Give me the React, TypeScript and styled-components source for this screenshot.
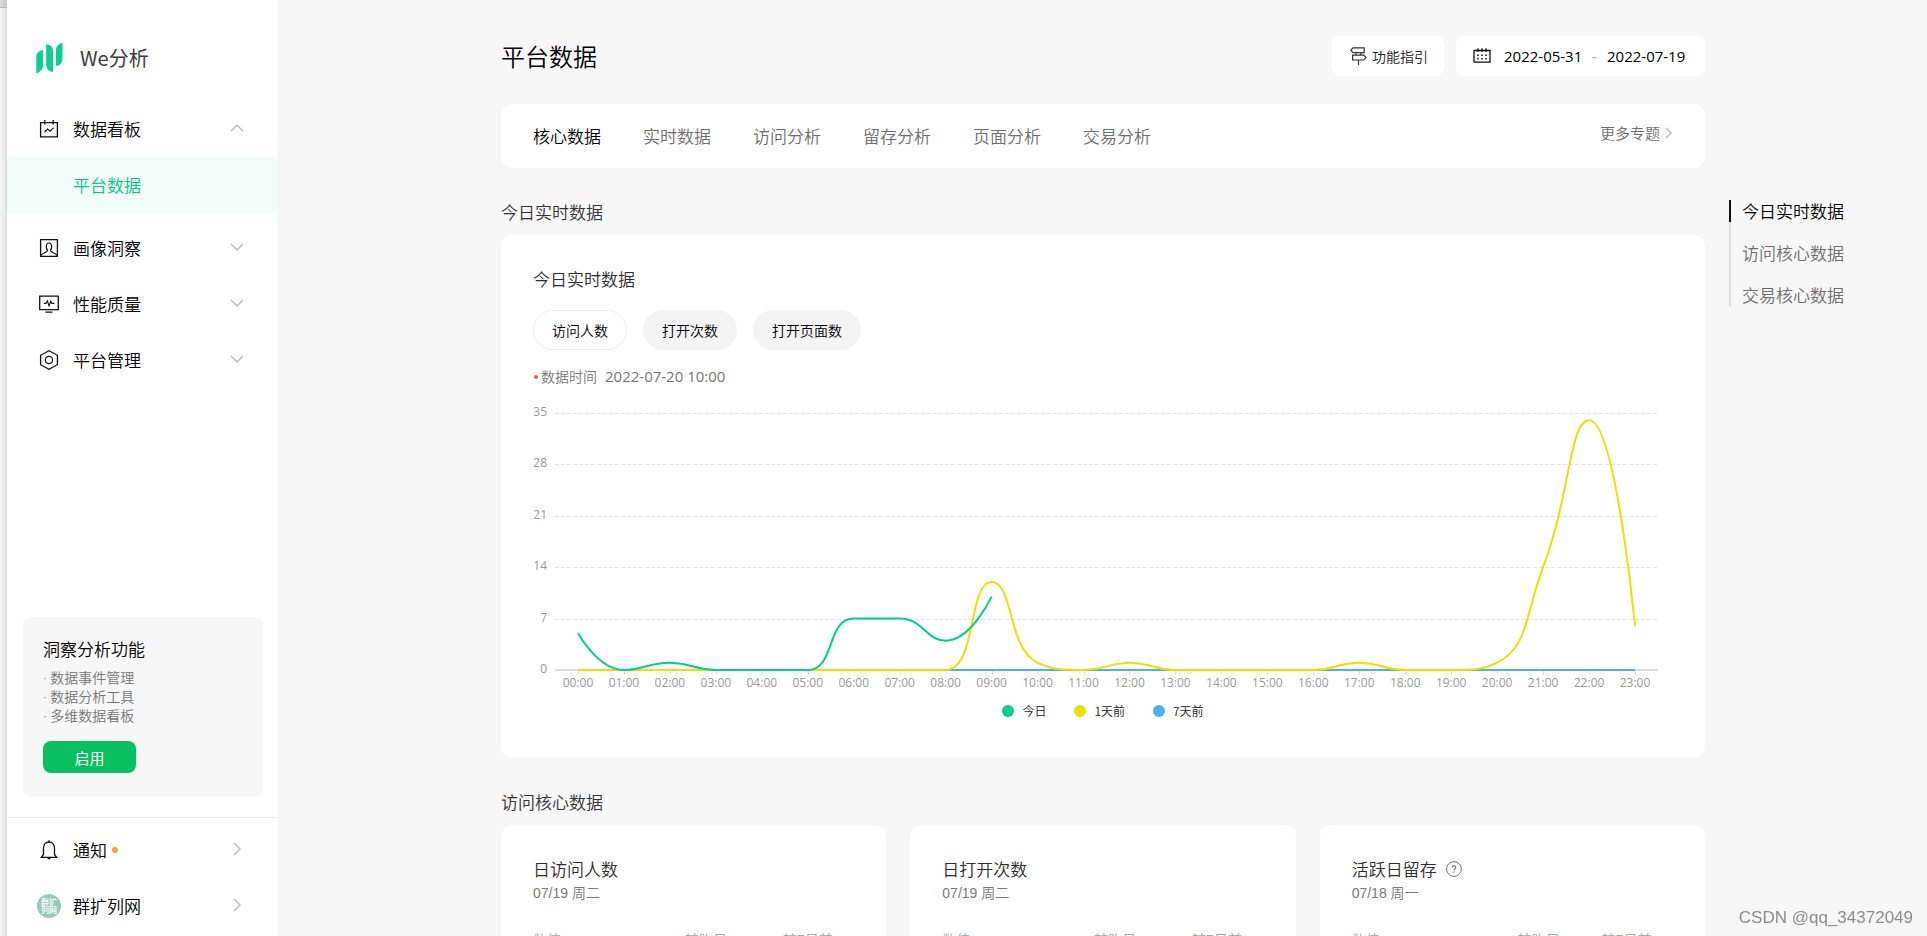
import React, { useState } from 'react';
import styled, { createGlobalStyle } from 'styled-components';

const GlobalStyle = createGlobalStyle`
  *, *::before, *::after { box-sizing: border-box; }
  body {
    margin: 0;
    background: #f7f7f7;
    color: #000;
    font-family: 'Noto Sans CJK SC', sans-serif;
    font-weight: 350;
  }
  button, input { font: inherit; color: inherit; }
  button { border: 0; background: none; padding: 0; cursor: pointer; }
  a { color: inherit; text-decoration: none; }
  h1, h2, h3, p, ul { margin: 0; padding: 0; font-weight: inherit; }
  ul { list-style: none; }
`;

const numeric = `'Open Sans', 'Noto Sans CJK SC', sans-serif`;
const arial = `'Liberation Sans', 'Noto Sans CJK SC', sans-serif`;

/* ---------- shell ---------- */

const Shell = styled.div`
  display: flex;
  height: 100vh;
  overflow: hidden;
`;

const WindowEdge = styled.div`
  flex: none;
  width: 7px;
  background: linear-gradient(to right, #f5f5f5, #ececec 60%, #d8d8d8);

  &::before {
    content: '';
    display: block;
    height: 8px;
    border-bottom: 1px solid #b4b4b4;
    background: linear-gradient(to right, #dcdcdc, #c8c8c8);
  }
`;

const Sidebar = styled.aside`
  flex: none;
  display: flex;
  flex-direction: column;
  width: 272px;
  background: #fff;
  border-right: 1px solid #f0f0f0;
`;

const Brand = styled.a`
  display: flex;
  align-items: center;
  gap: 17px;
  height: 101px;
  padding: 15px 29px 0;
  color: #3c3c3c;
  font-size: 20px;
  line-height: 24px;
  font-weight: 400;
`;

const MenuRow = styled.button`
  display: flex;
  align-items: center;
  width: 100%;
  height: 56px;
  padding: 0 34px 0 29px;
  font-size: 17px;
  line-height: 24px;
  text-align: left;
`;

const MenuIcon = styled.span`
  display: flex;
  justify-content: center;
  width: 26px;
  margin-right: 11px;
`;

const MenuArrow = styled.span`
  display: flex;
  margin-left: auto;
  padding-bottom: 2px;
`;

const SubLink = styled.a`
  display: flex;
  align-items: center;
  height: 56px;
  margin-bottom: 7px;
  padding-left: 66px;
  background: #f2fcf8;
  color: #00c884;
  font-size: 17px;
  line-height: 24px;
`;

const Promo = styled.section`
  margin: auto 15px 20px 16px;
  padding: 20px 20px 24px;
  border-radius: 8px;
  background: #f7f7f7;
`;

const PromoTitle = styled.h2`
  font-size: 17px;
  line-height: 24px;
`;

const PromoList = styled.ul`
  margin: 7px 0 16px;
  color: #767676;
  font-size: 14px;
  line-height: 19px;
`;

const PromoItem = styled.li`
  display: flex;
  gap: 4px;

  &::before {
    content: '·';
    font-family: ${numeric};
  }
`;

const PromoButton = styled.button`
  display: block;
  width: 93px;
  height: 32px;
  border-radius: 8px;
  background: #07c160;
  color: #fff;
  font-size: 15px;
  font-weight: 400;
`;

const SidebarFoot = styled.div`
  padding: 4px 0 2px;
  border-top: 1px solid #eee;
`;

const Dot = styled.i`
  width: 6px;
  height: 6px;
  margin-left: 5px;
  border-radius: 50%;
  background: #ffa033;
`;

const Avatar = styled.span`
  display: grid;
  place-content: center;
  width: 24px;
  height: 24px;
  border-radius: 50%;
  background: #95cbbb;
  color: #fff;
  font-size: 8px;
  line-height: 8px;
  font-weight: 500;
`;

/* ---------- main column ---------- */

const Main = styled.main`
  flex: 1;
  display: grid;
  grid-template-columns: 1fr minmax(0, 1204px) 1fr;
  align-items: start;
  min-width: 0;
  padding: 36px 0 48px;
  overflow-y: auto;
  scrollbar-width: none;
`;

const Content = styled.div`
  grid-column: 2;
`;

const Header = styled.header`
  display: flex;
  align-items: center;
  gap: 12px;
  margin-bottom: 28px;
`;

const PageTitle = styled.h1`
  margin-right: auto;
  font-size: 24px;
  line-height: 40px;
`;

const GuideButton = styled.button`
  display: flex;
  align-items: center;
  gap: 5px;
  height: 40px;
  padding: 0 16px 0 18px;
  border-radius: 8px;
  background: #fff;
  color: #222;
  font-size: 14px;
  line-height: 20px;
`;

const DateRange = styled.div`
  display: flex;
  align-items: center;
  height: 40px;
  padding: 0 18px 0 17px;
  border-radius: 8px;
  background: #fff;
  font-family: ${numeric};
  font-size: 15px;
  line-height: 20px;
  font-weight: 400;
`;

const DateInput = styled.input`
  width: 80px;
  padding: 0;
  border: 0;
  outline: 0;
  background: none;
`;

const DateIcon = styled.span`
  display: flex;
  margin-right: 13px;
`;

const DateDash = styled.span`
  width: 23px;
  padding-left: 8px;
  color: #999;
`;

const TabBar = styled.nav`
  display: flex;
  align-items: center;
  gap: 42px;
  height: 64px;
  padding: 0 32px;
  border-radius: 12px;
  background: #fff;
`;

const Tab = styled.a<{ $active?: boolean }>`
  color: ${(p) => (p.$active ? '#000' : '#6e6e6e')};
  font-size: 17px;
  line-height: 24px;
`;

const MoreLink = styled.a`
  display: flex;
  align-items: center;
  gap: 5px;
  margin-left: auto;
  padding-bottom: 6px;
  color: #6e6e6e;
  font-size: 15px;
  line-height: 20px;
`;

const SectionTitle = styled.h2`
  margin: 32px 0 11px;
  color: #333;
  font-size: 17px;
  line-height: 24px;
`;

const Card = styled.section`
  padding: 32px 32px 38px;
  border-radius: 12px;
  background: #fff;
`;

const CardTitle = styled.h3`
  display: flex;
  align-items: center;
  gap: 9px;
  color: #2e2e2e;
  font-size: 17px;
  line-height: 24px;
`;

const Pills = styled.div`
  display: flex;
  gap: 16px;
  margin: 19px 0 16px;
`;

const Pill = styled.button<{ $active?: boolean }>`
  height: 40px;
  padding: 0 18px;
  border: 1px solid ${(p) => (p.$active ? '#eee' : '#f4f4f4')};
  border-radius: 20px;
  background: ${(p) => (p.$active ? '#fff' : '#f4f4f4')};
  font-size: 14px;
  line-height: 20px;
`;

const DataTime = styled.p`
  display: flex;
  align-items: center;
  color: #767676;
  font-size: 14px;
  line-height: 20px;
`;

const RedDot = styled.i`
  width: 4px;
  height: 4px;
  margin: 2px 3px 0 1px;
  border-radius: 50%;
  background: #fa5151;
`;

const Stamp = styled.time`
  margin-left: 8px;
  font-family: ${numeric};
  font-size: 15px;
  font-weight: 400;
`;

const ChartSvg = styled.svg`
  display: block;
  width: 100%;
  margin-top: 4px;
  font-family: ${numeric};
  font-size: 12px;
  font-weight: 400;
`;

const Legend = styled.ul`
  display: flex;
  justify-content: center;
  gap: 28px;
`;

const LegendItem = styled.li<{ $color: string }>`
  display: flex;
  align-items: center;
  gap: 8px;
  color: #222;
  font-size: 12px;
  line-height: 18px;

  &::before {
    content: '';
    width: 12px;
    height: 12px;
    border-radius: 50%;
    background: ${(p) => p.$color};
  }
`;

const Metrics = styled.div`
  display: grid;
  grid-template-columns: repeat(3, 1fr);
  gap: 24px;
`;

const MetricDate = styled.p`
  margin: 2px 0 27px;
  color: #7a7a7a;
  font-family: ${arial};
  font-size: 14px;
  line-height: 20px;
`;

const MetricHead = styled.div<{ $lead: number }>`
  display: grid;
  grid-template-columns: ${(p) => p.$lead}px ${(p) => 250 - p.$lead}px 1fr;
  color: #a6a6a6;
  font-family: ${arial};
  font-size: 14px;
  line-height: 20px;
`;

const MetricBody = styled.div`
  height: 120px;
`;

const Anchors = styled.nav`
  display: flex;
  flex-direction: column;
  align-items: flex-start;
  gap: 20px;
  margin: 164px 0 0 24px;
  background: linear-gradient(#e0e0e0, #e0e0e0) left / 2px 100% no-repeat;
`;

const AnchorLink = styled.a<{ $active?: boolean }>`
  padding-left: 11px;
  border-left: 2px solid ${(p) => (p.$active ? '#111' : 'transparent')};
  color: ${(p) => (p.$active ? '#000' : '#6e6e6e')};
  font-size: 17px;
  line-height: 22px;
`;

const Watermark = styled.div`
  position: fixed;
  right: 14px;
  bottom: 8px;
  color: #8c8c8c;
  font-family: ${arial};
  font-size: 17px;
  line-height: 20px;
  font-weight: 400;
`;

/* ---------- icons ---------- */

const Chevron = ({ d, w, h, stroke = '#b8b8b8' }: { d: string; w: number; h: number; stroke?: string }) => (
  <svg width={w} height={h} viewBox={`0 0 ${w} ${h}`} fill="none" stroke={stroke} strokeWidth="1.4" aria-hidden="true">
    <path d={d} />
  </svg>
);
const ChevronUp = () => <Chevron w={14} h={8} d="M1 7 7 1.2 13 7" />;
const ChevronDown = () => <Chevron w={14} h={8} d="M1 1 7 6.8 13 1" />;
const ChevronRight = () => <Chevron w={14} h={14} d="M4 1 10 7 4 13" />;
const ChevronSmall = () => <Chevron w={8} h={12} d="M1 1 6 6 1 11" />;

const LogoIcon = () => (
  <svg width="27" height="30" viewBox="0 0 27 30" fill="#07d18d" aria-hidden="true">
    <path d="M7 7V22Q7 27.500 1.500 30H.3V13.500Q.5 8 7 7Z" />
    <path d="M10.200 1Q17 2.200 17 8.500V29Q10.200 28 10.200 21.500Z" />
    <path d="M26.500 0V15.500Q26.500 22 20 23V7.500Q20 1 26.500 0Z" />
  </svg>
);

const iconProps = { fill: 'none', stroke: '#111', strokeWidth: 1.3, 'aria-hidden': true } as const;

const BoardIcon = () => (
  <svg width="20" height="18" viewBox="0 0 20 18" {...iconProps}>
    <path d="M1.600 2.600H18.400V16.800H1.600ZM5.800 0V4.400M14.200 0V4.400" />
    <path d="M5.600 12 8.600 9 11.200 11.200 14.600 7.600" strokeWidth="1.100" />
  </svg>
);

const PortraitIcon = () => (
  <svg width="20" height="20" viewBox="0 0 20 20" {...iconProps}>
    <path d="M1.600 1.600H18.400V18.400H1.600Z" />
    <path d="M8.700 12.300C6.500 10.500 6.800 5 10 5S13.500 10.500 11.300 12.300M8.700 12.200C8.500 14 4 15 1.800 17.400M11.300 12.200C11.500 14 16 15 18.200 17.400" strokeWidth="1.200" />
  </svg>
);

const MonitorIcon = () => (
  <svg width="20" height="18" viewBox="0 0 20 18" {...iconProps}>
    <path d="M.7 1.200H19.300V14.600H.7ZM6.500 17.200H13.500" />
    <path d="M4.800 8.400H7L8.400 5.800 10 10.800 11.800 6.200 12.800 8.400H15.400" strokeWidth="1.100" />
  </svg>
);

const HexIcon = () => (
  <svg width="20" height="20" viewBox="0 0 20 20" {...iconProps}>
    <path d="M10 .8 18.400 5.300V14.700L10 19.200 1.600 14.700V5.300Z" />
    <circle cx="10" cy="10" r="3.600" />
  </svg>
);

const BellIcon = () => (
  <svg width="18" height="20" viewBox="0 0 18 20" {...iconProps}>
    <path d="M1.400 17.300H16.600L14.500 14.500V8C14.500 4.500 12.300 2 9 2S3.500 4.500 3.500 8V14.500Z" />
    <path d="M9 .3V2M7.500 18.600H10.500" />
  </svg>
);

const SignpostIcon = () => (
  <svg width="17" height="18" viewBox="0 0 17 18" {...iconProps} stroke="#333" strokeWidth="1.200">
    <path d="M3 .8H14.200V5.600H3L.8 3.200ZM2.600 8.200H13.800L16 10.600 13.800 13H2.600ZM6 5.600V8.200M10.800 5.600V8.200M8.500 13V18" />
  </svg>
);

const CalendarIcon = () => (
  <svg width="18" height="16" viewBox="0 0 18 16" {...iconProps}>
    <path d="M1 2.500H17V14.200H1ZM5 .3V4M9 .3V4M13 .3V4" />
    <path d="M4.200 7.200H13.800M4.200 10.800H13.800" strokeDasharray="1.500 2.550" strokeWidth="1.500" />
  </svg>
);

const HelpIcon = () => (
  <svg width="16" height="16" viewBox="0 0 16 16" fill="none" stroke="#777" role="img" aria-label="说明">
    <circle cx="8" cy="8" r="7.400" />
    <path d="M6.200 6.600Q6.200 4.900 8 4.900T9.800 6.500C9.800 7.700 8 7.900 8 9.500M8 10.600V11.700" strokeWidth="1.100" />
  </svg>
);

/* ---------- chart ---------- */

const LEFT = 22;
const TOP = 23;
const PLOT_W = 1103;
const PLOT_H = 257;
const MAX = 35;

const series = [
  { name: '7天前', color: '#4cb1ea', data: Array(24).fill(0) },
  { name: '1天前', color: '#eddf00', data: [0, 0, 0, 0, 0, 0, 0, 0, 0, 12, 1, 0, 1, 0, 0, 0, 0, 1, 0, 0, 1, 14, 34, 6] },
  { name: '今日', color: '#04ce8a', data: [5, 0, 1, 0, 0, 0, 7, 7, 4, 10] },
];

const px = (i: number) => LEFT + (PLOT_W / 24) * (i + 0.5);
const py = (v: number) => TOP + PLOT_H * (1 - v / MAX);
const clamp = (v: number, a: number, b: number) => Math.max(Math.min(a, b), Math.min(Math.max(a, b), v));

/* Bezier smoothing whose handles never leave the box of their own segment. */
function smoothPath(data: number[]) {
  const pts = data.map((v, i) => [px(i), py(v)]);
  let out = `M${pts[0][0]} ${pts[0][1]}`;
  let [c0x, c0y] = pts[0];
  for (let i = 1; i < pts.length; i++) {
    const [ax, ay] = pts[i - 1];
    const [x, y] = pts[i];
    let [c1x, c1y] = pts[i];
    let nx = x;
    let ny = y;
    if (i < pts.length - 1) {
      const [bx, by] = pts[i + 1];
      const prev = Math.hypot(x - ax, y - ay);
      const next = Math.hypot(bx - x, by - y);
      const ratio = next / (next + prev);
      nx = clamp(x + (bx - ax) * 0.5 * ratio, x, bx);
      ny = clamp(y + (by - ay) * 0.5 * ratio, y, by);
      c1x = clamp(x - ((nx - x) * prev) / next, ax, x);
      c1y = clamp(y - ((ny - y) * prev) / next, ay, y);
      nx = x + ((x - c1x) * next) / prev;
      ny = y + ((y - c1y) * next) / prev;
    }
    out += `C${c0x} ${c0y} ${c1x} ${c1y} ${x} ${y}`;
    c0x = nx;
    c0y = ny;
  }
  return out;
}

const hours = Array.from({ length: 24 }, (_, i) => `${String(i).padStart(2, '0')}:00`);

const Chart = () => (
  <ChartSvg viewBox="0 0 1140 312" role="img" aria-label="今日实时数据">
    {[35, 28, 21, 14, 7, 0].map((v) => {
      const y = Math.round(py(v));
      return (
        <g key={v}>
          <text x="14" y={y + 3} textAnchor="end" fill="#999">{v}</text>
          {v > 0 && (
            <path d={`M${LEFT} ${y + 0.5}H${LEFT + PLOT_W}`} stroke="#e0e3ee" strokeDasharray="4 2" />
          )}
        </g>
      );
    })}
    <path d={`M${LEFT} ${py(0)}H${LEFT + PLOT_W}`} stroke="#ddd" strokeWidth="2" />
    {hours.map((h, i) => (
      <g key={h}>
        <path d={`M${Math.round(px(i)) + 0.5} ${py(0)}v5`} stroke="#ddd" />
        <text x={px(i)} y="297" textAnchor="middle" fill="#999">{h}</text>
      </g>
    ))}
    {series.map((s) => (
      <path key={s.name} d={smoothPath(s.data)} fill="none" stroke={s.color} strokeWidth="2" />
    ))}
  </ChartSvg>
);

/* ---------- page ---------- */

const menu = [
  { label: '画像洞察', icon: <PortraitIcon /> },
  { label: '性能质量', icon: <MonitorIcon /> },
  { label: '平台管理', icon: <HexIcon /> },
];
const tabs = ['核心数据', '实时数据', '访问分析', '留存分析', '页面分析', '交易分析'];
const pills = ['访问人数', '打开次数', '打开页面数'];
const metrics = [
  { title: '日访问人数', date: '07/19 周二', lead: 152 },
  { title: '日打开次数', date: '07/19 周二', lead: 152 },
  { title: '活跃日留存', date: '07/18 周一', lead: 166, help: true },
];
const anchors = ['今日实时数据', '访问核心数据', '交易核心数据'];

export default function App() {
  const [pill, setPill] = useState(0);

  return (
    <>
      <GlobalStyle />
      <Shell>
        <WindowEdge />
        <Sidebar>
          <Brand href="#home"><LogoIcon />We分析</Brand>
          <nav aria-label="主菜单">
            <MenuRow type="button" aria-expanded="true">
              <MenuIcon><BoardIcon /></MenuIcon>
              数据看板
              <MenuArrow><ChevronUp /></MenuArrow>
            </MenuRow>
            <SubLink href="#platform" aria-current="page">平台数据</SubLink>
            {menu.map((m) => (
              <MenuRow key={m.label} type="button" aria-expanded="false">
                <MenuIcon>{m.icon}</MenuIcon>
                {m.label}
                <MenuArrow><ChevronDown /></MenuArrow>
              </MenuRow>
            ))}
          </nav>
          <Promo>
            <PromoTitle>洞察分析功能</PromoTitle>
            <PromoList>
              <PromoItem>数据事件管理</PromoItem>
              <PromoItem>数据分析工具</PromoItem>
              <PromoItem>多维数据看板</PromoItem>
            </PromoList>
            <PromoButton type="button">启用</PromoButton>
          </Promo>
          <SidebarFoot>
            <MenuRow type="button">
              <MenuIcon><BellIcon /></MenuIcon>
              通知<Dot />
              <MenuArrow><ChevronRight /></MenuArrow>
            </MenuRow>
            <MenuRow type="button">
              <MenuIcon><Avatar aria-hidden="true"><span>群扩</span><span>列网</span></Avatar></MenuIcon>
              群扩列网
              <MenuArrow><ChevronRight /></MenuArrow>
            </MenuRow>
          </SidebarFoot>
        </Sidebar>

        <Main>
          <Content>
            <Header>
              <PageTitle>平台数据</PageTitle>
              <GuideButton type="button"><SignpostIcon />功能指引</GuideButton>
              <DateRange>
                <DateIcon><CalendarIcon /></DateIcon>
                <DateInput aria-label="开始日期" defaultValue="2022-05-31" />
                <DateDash>-</DateDash>
                <DateInput aria-label="结束日期" defaultValue="2022-07-19" />
              </DateRange>
            </Header>

            <TabBar aria-label="专题">
              {tabs.map((t, i) => (
                <Tab key={t} href={`#tab-${i}`} $active={i === 0}>{t}</Tab>
              ))}
              <MoreLink href="#more">更多专题<ChevronSmall /></MoreLink>
            </TabBar>

            <SectionTitle>今日实时数据</SectionTitle>
            <Card>
              <CardTitle>今日实时数据</CardTitle>
              <Pills>
                {pills.map((p, i) => (
                  <Pill key={p} type="button" $active={i === pill} aria-pressed={i === pill} onClick={() => setPill(i)}>
                    {p}
                  </Pill>
                ))}
              </Pills>
              <DataTime><RedDot />数据时间<Stamp>2022-07-20 10:00</Stamp></DataTime>
              <Chart />
              <Legend>
                {[...series].reverse().map((s) => (
                  <LegendItem key={s.name} $color={s.color}>{s.name}</LegendItem>
                ))}
              </Legend>
            </Card>

            <SectionTitle>访问核心数据</SectionTitle>
            <Metrics>
              {metrics.map((m) => (
                <Card key={m.title}>
                  <CardTitle>{m.title}{m.help && <HelpIcon />}</CardTitle>
                  <MetricDate>{m.date}</MetricDate>
                  <MetricHead $lead={m.lead}>
                    <span>数值</span><span>较昨日</span><span>较7日前</span>
                  </MetricHead>
                  <MetricBody />
                </Card>
              ))}
            </Metrics>
          </Content>
          <Anchors aria-label="页内导航">
            {anchors.map((a, i) => (
              <AnchorLink key={a} href={`#section-${i}`} $active={i === 0}>{a}</AnchorLink>
            ))}
          </Anchors>
        </Main>
        <Watermark>CSDN @qq_34372049</Watermark>
      </Shell>
    </>
  );
}
